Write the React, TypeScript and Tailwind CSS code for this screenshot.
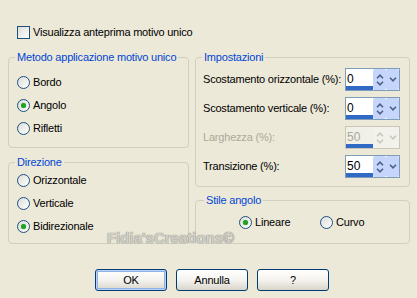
import React from "react";

const Radio = ({ checked }: { checked?: boolean }) => (
  <span className="w-[13px] h-[13px] rounded-full border border-[#1C5180] bg-gradient-to-br from-[#DCDCD7] to-white flex items-center justify-center shrink-0">
    {checked && <span className="w-[5px] h-[5px] rounded-full bg-[#21A121] shadow-[0_0_1px_#4cc44c]" />}
  </span>
);

const RadioRow = ({ label, checked }: { label: string; checked?: boolean }) => (
  <div className="h-[23px] flex items-center gap-[3px] pl-[8px]">
    <Radio checked={checked} />
    <span>{label}</span>
  </div>
);

const Chevron = ({ up, color }: { up?: boolean; color: string }) => (
  <svg width="8" height="5" viewBox="0 0 8 5">
    <path
      d={up ? "M1 4.2 L4 1.2 L7 4.2" : "M1 0.8 L4 3.8 L7 0.8"}
      fill="none"
      stroke={color}
      strokeWidth="1.6"
    />
  </svg>
);

const Spin = ({ value, disabled }: { value: string; disabled?: boolean }) => {
  const c = disabled ? "#C9C7BA" : "#4D6185";
  return (
    <div
      className={`w-[55px] h-[23px] shrink-0 border flex ${
        disabled ? "border-[#C9C7BA] bg-[#F0EFE8]" : "border-[#7F9DB9] bg-white"
      }`}
    >
      <div className="w-[27px] flex flex-col">
        <div className={`flex-1 pl-[1px] pt-[3px] text-[12px] leading-[14px] tracking-normal ${disabled ? "text-[#ACA899]" : "text-black"}`}>
          {value}
        </div>
        <div className="h-[4px] bg-[#316AC5]" />
      </div>
      <div
        className={`w-[13px] flex flex-col items-center justify-center gap-[2px] rounded-[2px] ${
          disabled ? "bg-[#F2F1EC]" : "bg-[#C5D5FC]"
        }`}
      >
        <Chevron up color={c} />
        <Chevron color={c} />
      </div>
      <div
        className={`w-[13px] flex items-center justify-center rounded-[2px] ${
          disabled ? "bg-[#F2F1EC]" : "bg-[#C5D5FC]"
        }`}
      >
        <Chevron color={c} />
      </div>
    </div>
  );
};

const SpinRow = ({ label, value, disabled }: { label: string; value: string; disabled?: boolean }) => (
  <div className="h-[23px] flex items-center justify-between pl-[7px] pr-[9px]">
    <span className={`whitespace-nowrap ${disabled ? "text-[#ACA899]" : ""}`}>{label}</span>
    <Spin value={value} disabled={disabled} />
  </div>
);

const Btn = ({ label, def }: { label: string; def?: boolean }) => (
  <button
    className={`w-[72px] h-[22px] rounded-[3px] border border-[#003C74] bg-gradient-to-b from-white via-[#F4F3EE] to-[#D9D5CB] flex items-center justify-center ${
      def ? "shadow-[inset_0_0_0_1px_#B8D3F9,inset_0_0_0_2px_#8DB2E3]" : ""
    }`}
  >
    {label}
  </button>
);

export default function App() {
  return (
    <div className="relative w-[417px] h-[298px] bg-[#ECE9D8] text-black text-[11px] leading-[13px] tracking-[-0.2px] whitespace-nowrap font-['Liberation_Sans',Arial,sans-serif] flex flex-col pt-[26px] pl-[8px]">
      <div className="ml-[9px] h-[13px] flex items-center gap-[3px]">
        <span className="w-[13px] h-[13px] border border-[#1C5180] bg-gradient-to-br from-[#DCDCD7] to-white shrink-0" />
        <span>Visualizza anteprima motivo unico</span>
      </div>

      <div className="mt-[11px] flex gap-[6px]">
        <div className="w-[181px] flex flex-col gap-[7px]">
          <fieldset className="h-[98px] border border-[#D0D0BF] rounded-[4px] p-0 m-0">
            <legend className="ml-[6px] px-[2px] leading-[14px] text-[#0046D5]">Metodo applicazione motivo unico</legend>
            <div className="pt-[7px]">
              <RadioRow label="Bordo" />
              <RadioRow label="Angolo" checked />
              <RadioRow label="Rifletti" />
            </div>
          </fieldset>
          <fieldset className="h-[89px] border border-[#D0D0BF] rounded-[4px] p-0 m-0">
            <legend className="ml-[6px] px-[2px] leading-[14px] text-[#0046D5]">Direzione</legend>
            <div className="pt-[0px]">
              <RadioRow label="Orizzontale" />
              <RadioRow label="Verticale" />
              <RadioRow label="Bidirezionale" checked />
            </div>
          </fieldset>
        </div>

        <div className="w-[215px] flex flex-col gap-[6px]">
          <fieldset className="h-[137px] border border-[#D0D0BF] rounded-[4px] p-0 m-0">
            <legend className="ml-[6px] px-[2px] leading-[14px] text-[#0046D5]">Impostazioni</legend>
            <div className="pt-[4px] flex flex-col gap-[6px]">
              <SpinRow label="Scostamento orizzontale (%):" value="0" />
              <SpinRow label="Scostamento verticale (%):" value="0" />
              <SpinRow label="Larghezza (%):" value="50" disabled />
              <SpinRow label="Transizione (%):" value="50" />
            </div>
          </fieldset>
          <fieldset className="h-[51px] border border-[#D0D0BF] rounded-[4px] p-0 m-0">
            <legend className="ml-[8px] px-[2px] leading-[14px] text-[#0046D5]">Stile angolo</legend>
            <div className="pt-[4px] pl-[43px] flex">
              <div className="w-[81px] h-[23px] flex items-center gap-[3px]">
                <Radio checked />
                <span>Lineare</span>
              </div>
              <div className="h-[23px] flex items-center gap-[3px]">
                <Radio />
                <span>Curvo</span>
              </div>
            </div>
          </fieldset>
        </div>
      </div>

      <div className="mt-[25px] ml-[87px] flex gap-[9px]">
        <Btn label="OK" def />
        <Btn label="Annulla" />
        <Btn label="?" />
      </div>

      <div className="absolute left-[107px] top-[229px] text-[15px] leading-[17px] tracking-normal font-bold text-[#D2D0C8] [text-shadow:0_0_1px_#8E8C86,0_0_1px_#8E8C86] pointer-events-none">
        Fidia'sCreations©
      </div>
    </div>
  );
}
